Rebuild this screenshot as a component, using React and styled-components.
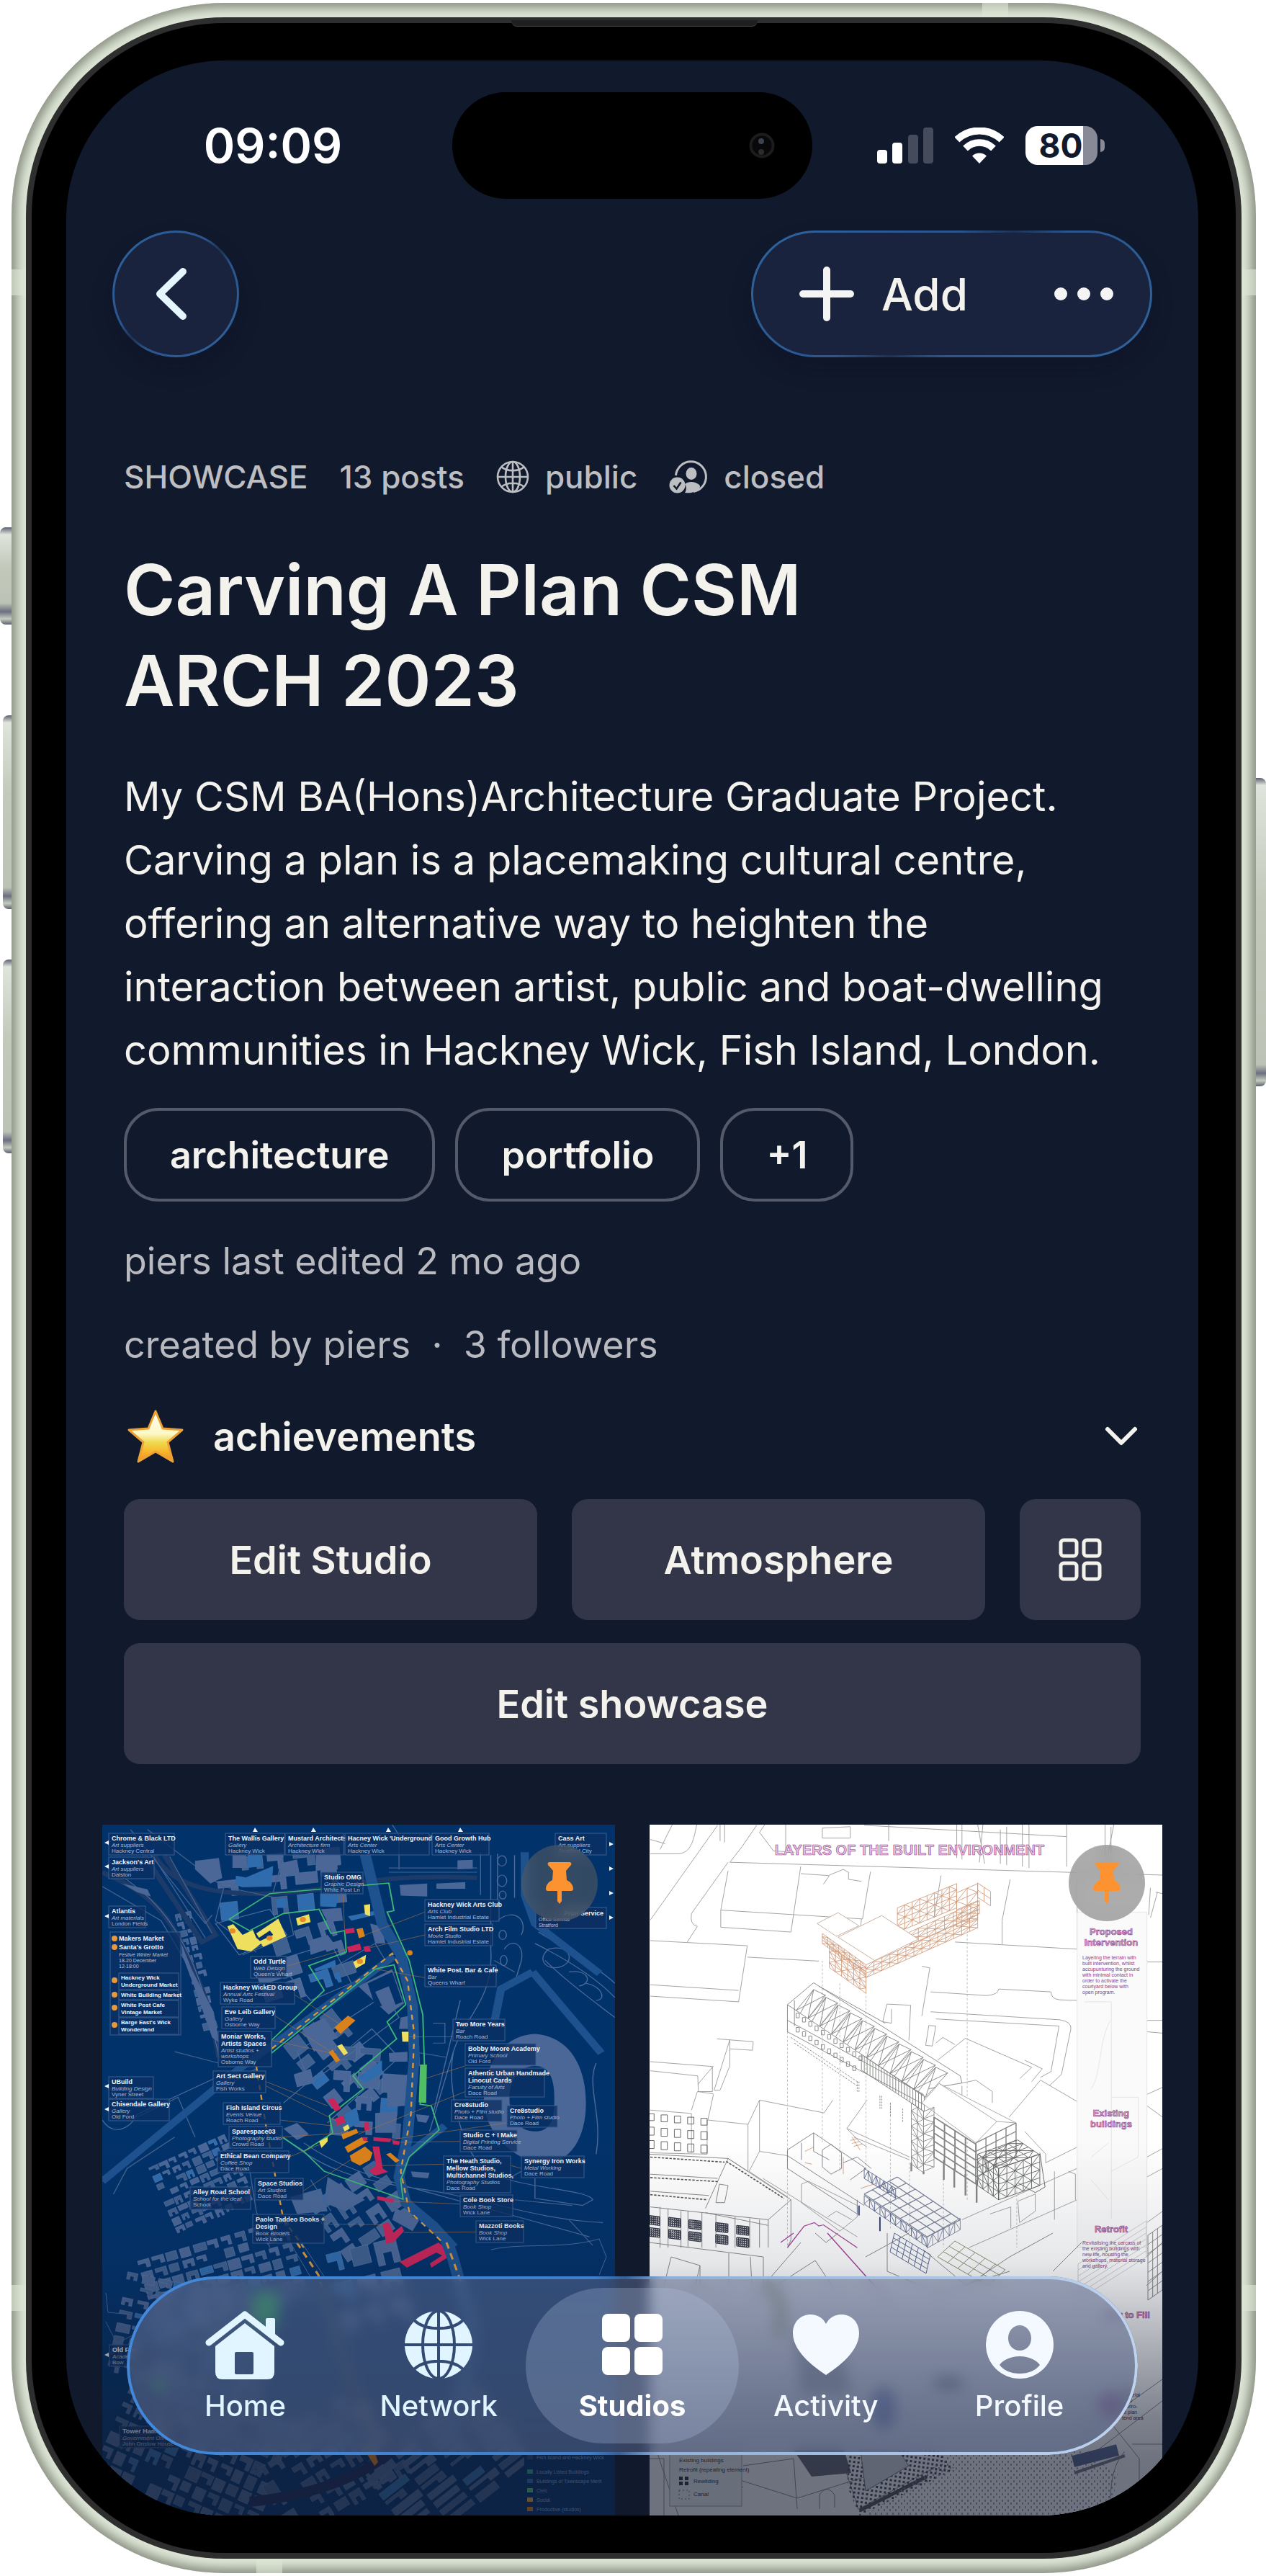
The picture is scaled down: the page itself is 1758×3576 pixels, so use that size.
import React from 'react';
import styled, { createGlobalStyle } from 'styled-components';

const GlobalStyle = createGlobalStyle`
  *, *::before, *::after { box-sizing: border-box; }
  body {
    margin: 0;
    background: #fff;
    font-family: Inter, "Liberation Sans", sans-serif;
    -webkit-font-smoothing: antialiased;
  }
  button { font: inherit; color: inherit; border: 0; background: none; padding: 0; cursor: pointer; }
  a { color: inherit; text-decoration: none; }
  svg { display: block; flex: none; }
`;

/* ---------- device ---------- */

const Page = styled.main`
  padding: 4px 14px 4px 16px;
`;

const Device = styled.div`
  position: relative;
  padding: 20px;
  border-radius: 296px;
  background: #dde6d6;
  box-shadow: inset 0 0 14px 7px #8a9083;
`;

const Rim = styled.div`
  padding: 8px;
  border-radius: 276px;
  background: #2e2e2e;
`;

const Bezel = styled.div`
  position: relative;
  padding: 52px 52px 52px 48px;
  border-radius: 268px;
  background: #000;
`;

const Speaker = styled.span`
  position: absolute;
  top: -4px;
  left: 50%;
  width: 342px;
  height: 9px;
  margin-left: -170px;
  border-radius: 0 0 8px 8px;
  background: #1e201f;
  border-bottom: 1px solid #444;
`;

const Key = styled.span`
  position: absolute;
  top: ${p => p.$top}px;
  height: ${p => p.$height}px;
  ${p => (p.$right ? 'left: 100%; width: 14px; border-radius: 0 8px 8px 0;' : `right: 100%; width: ${p.$width}px; border-radius: 8px 0 0 8px;`)}
  background: linear-gradient(#5d6070 0, #dfe4dc 10px, #c3cabc 40%, #bcc3b6 calc(100% - 30px), #6b6e80 calc(100% - 18px), #c5ccc0 calc(100% - 8px), #5d6070 100%);
`;

const Band = styled.span`
  position: absolute;
  background: rgba(222, 230, 214, 0.6);
  ${p => (p.$side === 'left' || p.$side === 'right' ? 'width: 20px; height: 36px;' : 'width: 36px; height: 20px;')}
  ${p => p.$side}: 0;
  ${p => p.$from}: ${p => p.$at}px;
`;

const Screen = styled.div`
  position: relative;
  display: flex;
  flex-direction: column;
  aspect-ratio: 393 / 852;
  border-radius: 220px;
  overflow: hidden;
  background: #11192d;
  color: #f4f2ec;
`;

/* ---------- status bar and header ---------- */

const StatusBar = styled.div`
  display: grid;
  grid-template-columns: 1fr 500px 1fr;
  align-items: center;
  flex: none;
  height: 236px;
  color: #fff;
`;

const Clock = styled.time`
  padding-left: 38px;
  text-align: center;
  font-size: 66px;
  font-weight: 600;
`;

const Island = styled.div`
  display: flex;
  align-items: center;
  justify-content: flex-end;
  height: 148px;
  padding-right: 52px;
  border-radius: 74px;
  background: #000;
`;

const Indicators = styled.div`
  display: flex;
  align-items: center;
  justify-content: center;
  gap: 30px;
  padding-right: 40px;
`;

const Battery = styled.div`
  display: flex;
  align-items: center;
  gap: 4px;
`;

const Charge = styled.div`
  width: 100px;
  height: 54px;
  border-radius: 17px;
  background: linear-gradient(90deg, #fff 80%, #888a98 80%);
  color: #11192d;
  padding-right: 2px;
  text-align: center;
  font-size: 46px;
  line-height: 54px;
  font-weight: 700;
`;

const BatteryTip = styled.i`
  width: 6px;
  height: 18px;
  border-radius: 0 6px 6px 0;
  background: #888a98;
`;

const Header = styled.header`
  display: flex;
  justify-content: space-between;
  flex: none;
  padding: 0 64px;
`;

const glass = `
  height: 176px;
  border: 3px solid transparent;
  border-radius: 88px;
  background:
    linear-gradient(#1a233e, #1a233e) padding-box,
    linear-gradient(135deg, #2f659f 0%, #2a558f 40%, #1e3354 50%, #2a558f 60%, #2f659f 100%) border-box;
  box-shadow: 0 16px 32px rgba(8, 12, 28, 0.2);
`;

const BackButton = styled.button`
  ${glass}
  display: grid;
  place-items: center;
  width: 176px;
  padding-right: 12px;
`;

const ActionPill = styled.div`
  ${glass}
  display: flex;
  align-items: center;
  gap: 120px;
  padding: 0 51px 0 64px;
`;

const PillButton = styled.button`
  display: flex;
  align-items: center;
  gap: 38px;
  height: 100%;
  font-size: 62px;
  font-weight: 500;
`;

/* ---------- studio details ---------- */

const Details = styled.section`
  flex: none;
  padding: 138px 80px 0;
`;

const Meta = styled.div`
  display: flex;
  align-items: center;
  height: 56px;
  gap: 44px;
  font-size: 44px;
  font-weight: 500;
  color: #bdbec2;
`;

const MetaItem = styled.span`
  display: flex;
  align-items: center;
  gap: 22px;
`;

const Title = styled.h1`
  max-width: 1100px;
  margin: 66px 0 0;
  font-size: 97px;
  line-height: 126px;
  font-weight: 600;
`;

const Description = styled.p`
  margin: 54px 0 0;
  font-size: 56px;
  line-height: 88px;
  white-space: pre-line;
`;

const Tags = styled.div`
  display: flex;
  gap: 28px;
  margin: 36px 0 24px;
`;

const Tag = styled.a`
  display: grid;
  place-items: center;
  height: 130px;
  padding: 0 60px;
  border: 4px solid #545a69;
  border-radius: 48px;
  font-size: 52px;
  font-weight: 600;
`;

const Credit = styled.p`
  display: flex;
  align-items: center;
  height: 116px;
  margin: 0;
  font-size: 52px;
  color: #b9bac0;
  white-space: pre;
`;

const Achievements = styled.button`
  display: flex;
  align-items: center;
  width: 100%;
  height: 140px;
  padding: 0 4px;
  gap: 40px;
  font-size: 54px;
  font-weight: 600;

  svg:last-child { margin-left: auto; }
`;

const Actions = styled.div`
  display: grid;
  grid-template-columns: 1fr 1fr 168px;
  gap: 32px 48px;
  margin-top: 17px;
`;

const Action = styled.button`
  display: grid;
  place-items: center;
  height: 168px;
  border-radius: 22px;
  background: #323648;
  font-size: 54px;
  font-weight: 600;
  ${p => p.$wide && 'grid-column: 1 / -1;'}
`;

/* ---------- gallery ---------- */

const Gallery = styled.section`
  display: grid;
  grid-template-columns: 1fr 1fr;
  gap: 48px;
  flex: 1;
  min-height: 0;
  padding: 84px 50px 0;
`;

const Post = styled.a`
  position: relative;
  min-height: 0;
  overflow: hidden;

  > svg { width: 100%; height: 100%; }
`;

const Pin = styled.span`
  position: absolute;
  top: 28px;
  right: 24px;
  display: grid;
  place-items: center;
  width: 106px;
  height: 106px;
  border-radius: 50%;
  background: rgba(96, 96, 96, 0.52);
  backdrop-filter: blur(10px);
`;

const Fade = styled.div`
  position: absolute;
  inset: auto 0 0;
  height: 520px;
  background: linear-gradient(rgba(17, 25, 45, 0) 0%, rgba(17, 25, 45, 0.1) 32%, rgba(17, 25, 45, 0.34) 54%, rgba(17, 25, 45, 0.55) 74%, rgba(17, 25, 45, 0.61) 86%);
  pointer-events: none;
`;

/* ---------- tab bar ---------- */

const TabBar = styled.nav`
  position: absolute;
  left: 84px;
  right: 84px;
  bottom: 84px;
  display: grid;
  grid-template-columns: repeat(5, 1fr);
  height: 248px;
  padding: 16px 30px;
  border-radius: 124px;
  background: rgba(88, 104, 140, 0.54);
  backdrop-filter: blur(9px);

  &::after {
    content: "";
    position: absolute;
    inset: 0;
    padding: 4px;
    border-radius: inherit;
    background: linear-gradient(92deg, #4289dd 0, #3f7fcb 46%, #35609a 49%, #8fb0da 53%, #bfd3ef 100%);
    mask: linear-gradient(#000 0 0) content-box exclude, linear-gradient(#000 0 0);
    pointer-events: none;
  }
`;

const Tab = styled.a`
  position: relative;
  display: flex;
  flex-direction: column;
  align-items: center;
  justify-content: space-between;
  padding: 30px 0 28px;
  font-size: 40px;
  line-height: 48px;
  font-weight: ${p => (p.$active ? 700 : 500)};
  color: ${p => p.$tint};

  ${p => p.$active && `
    &::before {
      content: "";
      position: absolute;
      inset: 0 -14px;
      z-index: -1;
      border-radius: 108px;
      background: rgba(184, 200, 232, 0.26);
    }
  `}
`;

const TabIcon = styled.span`
  display: grid;
  place-items: center;
  height: 98px;
`;

/* ---------- icons ---------- */

const Camera = () => (
  <svg width="36" height="36" viewBox="0 0 36 36">
    <circle cx="18" cy="18" r="15.500" fill="#08080a" stroke="#1b1c1e" strokeWidth="4" />
    <ellipse cx="17" cy="12" rx="4" ry="4" fill="#3d4152" />
    <ellipse cx="17" cy="27" rx="4" ry="4" fill="#2c2c2c" />
  </svg>
);

const Signal = () => (
  <svg width="78" height="50" viewBox="0 0 78 50" fill="#fff">
    <rect x="0" y="31" width="14" height="19" rx="4" />
    <rect x="21" y="21" width="14" height="29" rx="4" />
    <rect x="43" y="10" width="14" height="40" rx="4" opacity="0.22" />
    <rect x="64" y="0" width="14" height="50" rx="4" opacity="0.22" />
  </svg>
);

const Wifi = () => (
  <svg width="68" height="50" viewBox="0 0 68 50" fill="none" stroke="#fff">
    <path d="M2.900 17A45 45 0 0 1 65.100 17" strokeWidth="10" />
    <path d="M14.500 29A28 28 0 0 1 53.500 29" strokeWidth="9.500" />
    <path d="M24 39.500A14.500 14.500 0 0 1 44 39.500L34 50Z" fill="#fff" stroke="none" />
  </svg>
);

const ChevronLeft = () => (
  <svg width="44" height="72" viewBox="0 0 44 72" fill="none" stroke="#e6f6ff" strokeWidth="10" strokeLinecap="round" strokeLinejoin="round">
    <path d="M38 5 6 36l32 31" />
  </svg>
);

const Plus = () => (
  <svg width="76" height="76" viewBox="0 0 76 76" stroke="#f4f4f4" strokeWidth="10" strokeLinecap="round">
    <path d="M38 5v66M5 38h66" />
  </svg>
);

const Dots = () => (
  <svg width="82" height="18" viewBox="0 0 82 18" fill="#f4f4f4">
    <circle cx="9" cy="9" r="9" />
    <circle cx="41" cy="9" r="9" />
    <circle cx="73" cy="9" r="9" />
  </svg>
);

const GlobeLine = () => (
  <svg width="46" height="46" viewBox="0 0 46 46" fill="none" stroke="#bdbec2" strokeWidth="2.600">
    <circle cx="23" cy="23" r="21" />
    <ellipse cx="23" cy="23" rx="10" ry="21" />
    <path d="M23 2v42M2 23h42M7 9c8 7 24 7 32 0M7 37c8-7 24-7 32 0" />
  </svg>
);

const MemberCheck = () => (
  <svg width="54" height="46" viewBox="0 0 54 46">
    <path d="M9.500 21A21 21 0 1 1 34 43.500" fill="none" stroke="#bdbec2" strokeWidth="3" />
    <ellipse cx="31" cy="18.500" rx="7.500" ry="8.500" fill="#bdbec2" />
    <path d="M22 45c3-4 2-9 0-12 5-4 14-4 20 1 2 2 1 4-1 6-4 4-11 6-19 5Z" fill="#bdbec2" />
    <circle cx="11.500" cy="34.500" r="11" fill="#bdbec2" />
    <path d="m6.500 35 4 4.500 6-9" fill="none" stroke="#11192d" strokeWidth="2.600" />
  </svg>
);

const Star = () => (
  <svg width="80" height="76" viewBox="0 0 80 76">
    <defs>
      <linearGradient id="starFill" x1="0" y1="0" x2="0" y2="1">
        <stop offset="0" stopColor="#fffef4" />
        <stop offset="0.45" stopColor="#fdf7c4" />
        <stop offset="0.62" stopColor="#eed94f" />
        <stop offset="0.8" stopColor="#f9b72c" />
        <stop offset="1" stopColor="#ef8a1d" />
      </linearGradient>
    </defs>
    <path d="M40 3 50 27 77 29 57 46 64 73 40 59 16 73 23 46 3 29 30 27Z" fill="url(#starFill)" stroke="#eda236" strokeWidth="3" strokeLinejoin="round" />
  </svg>
);

const ChevronDown = () => (
  <svg width="46" height="28" viewBox="0 0 46 28" fill="none" stroke="#f4f2ec" strokeWidth="6" strokeLinecap="round" strokeLinejoin="round">
    <path d="m4 4 19 19L42 4" />
  </svg>
);

const GridOutline = () => (
  <svg width="60" height="60" viewBox="0 0 60 60" fill="none" stroke="#f4f2ec" strokeWidth="5">
    <rect x="3" y="3" width="22" height="22" rx="4" />
    <rect x="35" y="3" width="22" height="22" rx="4" />
    <rect x="3" y="35" width="22" height="22" rx="4" />
    <rect x="35" y="35" width="22" height="22" rx="4" />
  </svg>
);

const PinIcon = () => (
  <svg width="38" height="58" viewBox="0 0 38 58" fill="#fd9330">
    <path d="M5 0h28c3 0 3 4 1 5l-6 7 1 13c5 2 9 7 9 12 0 2-1 3-3 3H22v14l-3 4-3-4V40H3c-2 0-3-1-3-3 0-5 4-10 9-12l1-13-6-7C2 4 2 0 5 0Z" />
  </svg>
);

const HomeIcon = () => (
  <svg width="110" height="96" viewBox="0 0 110 96" fill="currentColor">
    <path d="M5 45 55 6l50 39" fill="none" stroke="currentColor" strokeWidth="9" strokeLinecap="round" strokeLinejoin="round" />
    <path d="M84 13q0-2 2-2h9q2 0 2 2v26L84 28Z" />
    <path fillRule="evenodd" d="M55 18 96 50v36q0 10-10 10H24q-10 0-10-10V50ZM43 58q-2 0-2 2v27q0 2 2 2h22q2 0 2-2V60q0-2-2-2Z" />
  </svg>
);

const NetworkIcon = () => (
  <svg width="94" height="94" viewBox="0 0 94 94">
    <mask id="globeCut">
      <rect width="94" height="94" fill="#fff" />
      <g fill="none" stroke="#000" strokeWidth="4">
        <ellipse cx="47" cy="47" rx="22" ry="47" />
        <path d="M47 0v94M0 47h94M13 13c16 15 52 15 68 0M13 81c16-15 52-15 68 0" />
      </g>
    </mask>
    <circle cx="47" cy="47" r="47" fill="currentColor" mask="url(#globeCut)" />
  </svg>
);

const StudiosIcon = () => (
  <svg width="84" height="86" viewBox="0 0 84 86" fill="currentColor">
    <rect x="0" y="0" width="39" height="39" rx="8" />
    <rect x="45" y="0" width="39" height="39" rx="8" />
    <rect x="0" y="46" width="39" height="39" rx="8" />
    <rect x="45" y="46" width="39" height="39" rx="8" />
  </svg>
);

const HeartIcon = () => (
  <svg width="92" height="84" viewBox="0 0 92 84" fill="currentColor">
    <path d="M46 84C38 78 0 55 0 26 0 10 11 0 25 0c9 0 17 5 21 13C50 5 58 0 67 0c14 0 25 10 25 26 0 29-38 52-46 58Z" />
  </svg>
);

const ProfileIcon = () => (
  <svg width="94" height="94" viewBox="0 0 94 94" fill="currentColor">
    <path fillRule="evenodd" d="M47 0a47 47 0 1 0 0 94 47 47 0 0 0 0-94Zm0 20c9 0 16 8 16 18s-7 17-16 17-16-7-16-17 7-18 16-18Zm0 43c13 0 24 6 28 12-6 8-16 12-28 12s-22-4-28-12c4-6 15-12 28-12Z" />
  </svg>
);

/* ---------- drawing helpers ---------- */

const seeded = seed => () => {
  seed = (seed * 16807) % 2147483647;
  return seed / 2147483647;
};

/* Lines of a parallelogram mesh: n cells along u, m cells along v. */
const mesh = (x, y, [ux, uy], [vx, vy], n, m, braces = false) => {
  let d = '';
  for (let i = 0; i <= n; i++) {
    const t = i / n;
    d += `M${x + ux * t} ${y + uy * t}l${vx} ${vy}`;
  }
  for (let j = 0; j <= m; j++) {
    const t = j / m;
    d += `M${x + vx * t} ${y + vy * t}l${ux} ${uy}`;
  }
  if (braces) {
    for (let i = 0; i < n; i++) {
      for (let j = 0; j < m; j++) {
        const a = [x + (ux * i) / n + (vx * j) / m, y + (uy * i) / n + (vy * j) / m];
        d += (i + j) % 2
          ? `M${a[0]} ${a[1]}l${ux / n + vx / m} ${uy / n + vy / m}`
          : `M${a[0] + ux / n} ${a[1] + uy / n}l${vx / m - ux / n} ${vy / m - uy / n}`;
      }
    }
  }
  return d;
};

/* ---------- map artwork ---------- */

const districts = [
  { x: 60, y: 575, w: 210, h: 110, a: -16, sx: 20, sy: 17, seed: 11 },
  { x: 20, y: 640, w: 200, h: 130, a: 12, sx: 22, sy: 18, seed: 14 },
  { x: 10, y: 780, w: 230, h: 180, a: 24, sx: 20, sy: 22, seed: 5 },
  { x: 220, y: 820, w: 180, h: 140, a: -32, sx: 24, sy: 24, seed: 8 },
  { x: 380, y: 820, w: 200, h: 140, a: -38, sx: 52, sy: 14, seed: 21 },
  { x: 80, y: 450, w: 110, h: 100, a: -24, sx: 15, sy: 13, seed: 31 },
  { x: 160, y: 40, w: 170, h: 70, a: -6, sx: 36, sy: 30, seed: 3 },
  { x: 210, y: 150, w: 110, h: 70, a: -18, sx: 34, sy: 32, seed: 9 },
  { x: 290, y: 270, w: 70, h: 150, a: -38, sx: 32, sy: 30, seed: 17 },
  { x: 320, y: 310, w: 90, h: 120, a: 4, sx: 34, sy: 34, seed: 27 },
  { x: 300, y: 490, w: 110, h: 80, a: -34, sx: 30, sy: 26, seed: 37 },
  { x: 320, y: 585, w: 90, h: 90, a: -14, sx: 34, sy: 42, seed: 41 },
  { x: 120, y: 120, w: 24, h: 160, a: -14, sx: 12, sy: 12, seed: 43 },
];

const makeBlocks = () => {
  const out = [];
  districts.forEach(({ x, y, w, h, a, sx, sy, seed }) => {
    const rnd = seeded(seed * 977);
    for (let j = 0; j < h / sy; j++) {
      for (let i = 0; i < w / sx; i++) {
        if (rnd() < 0.08) continue;
        const bw = sx * (0.6 + rnd() * 0.32);
        const bh = sy * (0.5 + rnd() * 0.35);
        const px = x + i * sx;
        const py = y + j * sy;
        const kind = rnd();
        let d = `M${px} ${py}h${bw}v${bh}h${-bw}Z`;
        if (kind < 0.35) d = `M${px} ${py}h${bw}v${bh}h${-bw * 0.35}v${-bh * 0.55}h${-bw * 0.65}Z`;
        else if (kind < 0.55) d = `M${px} ${py}h${bw}v${bh}h${-bw * 0.3}v${-bh * 0.5}h${-bw * 0.4}v${bh * 0.5}h${-bw * 0.3}Z`;
        out.push({
          d,
          turn: `rotate(${a} ${x + w / 2} ${y + h / 2})`,
          fill: rnd() < 0.07 ? '#2f6cad' : rnd() < 0.6 ? '#4a6797' : '#40608f',
        });
      }
    }
  });
  return out;
};
const blocks = makeBlocks();

const yellow = [
  '395,440 412,432 440,470 470,452 480,480 497,498 465,528 425,520',
  '480,465 545,413 568,475 500,512 490,492 530,470 520,455 488,480',
  '597,412 635,397 640,425 602,437', '797,365 815,362 815,405 800,398',
  '765,565 803,540 800,570 773,588', '908,810 928,810 928,845 910,845',
  '718,860 732,853 750,885 738,893', '735,1145 750,1135 755,1150 740,1160', '665,1195 690,1180 690,1195 672,1218',
];
const orange = [
  '710,795 750,753 772,770 728,818', '693,882 705,873 727,910 715,918', '775,450 793,445 800,475 782,482',
  '730,1170 775,1150 780,1165 735,1188', '740,1215 790,1180 810,1195 750,1235',
  '755,1245 800,1213 822,1235 815,1260 785,1280 760,1265', '862,1240 875,1235 902,1262 890,1270',
];
const red = [
  '740,450 768,445 770,462 742,467', '747,512 785,500 790,522 752,532', '795,512 812,508 818,528 800,530',
  '690,1050 708,1042 730,1080 712,1090', '712,1115 735,1103 742,1128 718,1140', '797,1130 811,1127 813,1155 799,1157',
  '825,1180 878,1185 874,1198 825,1193', '880,1190 903,1195 900,1208 882,1205', '792,1180 808,1180 806,1195 795,1192',
  '822,1213 842,1213 852,1290 868,1302 830,1315 812,1298 832,1280', '836,1387 887,1398 882,1410 836,1400',
  '852,1485 870,1480 884,1515 908,1492 915,1510 885,1548 862,1555', '995,1568 1010,1555 1025,1560 1025,1568',
];

/* x, y, width, height, bold lines, then small lines */
const labels = [
  [9, 12, 91, 30, ['Chrome & Black LTD'], ['Art suppliers', 'Hackney Central']],
  [9, 45, 63, 30, ["Jackson's Art"], ['Art suppliers', 'Dalston']],
  [9, 113, 51, 30, ['Atlantis'], ['Art materials', 'London Fields']],
  [9, 350, 62, 30, ['UBuild'], ['Building Design', 'Vyner Street']],
  [9, 381, 84, 30, ['Chisendale Gallery'], ['Gallery', 'Old Ford']],
  [171, 12, 82, 30, ['The Wallis Gallery'], ['Gallery', 'Hackney Wick']],
  [254, 12, 81, 30, ['Mustard Architects'], ['Architecture firm', 'Hackney Wick']],
  [337, 12, 117, 30, ["Hacney Wick 'Underground'"], ['Arts Center', 'Hackney Wick']],
  [458, 12, 79, 30, ['Good Growth Hub'], ['Arts Center', 'Hackney Wick']],
  [629, 12, 71, 30, ['Cass Art'], ['Art suppliers', 'Stratford City']],
  [304, 66, 58, 30, ['Studio OMG'], ['Graphic Design', 'White Post Ln']],
  [448, 104, 103, 30, ['Hackney Wick Arts Club'], ['Arts Club', 'Hamlet Industrial Estate']],
  [448, 138, 94, 30, ['Arch Film Studio LTD'], ['Movie Studio', 'Hamlet Industrial Estate']],
  [448, 195, 99, 30, ['White Post. Bar & Cafe'], ['Bar', 'Queens Wharf']],
  [206, 183, 50, 30, ['Odd Turtle'], ['Web Design', "Queen's Wharf"]],
  [164, 219, 103, 30, ['Hackney WickED Group'], ['Annual Arts Festival', 'Wyke Road']],
  [166, 253, 74, 30, ['Eve Leib Gallery'], ['Gallery', 'Osborne Way']],
  [161, 287, 74, 49, ['Moniar Works,', 'Artists Spaces'], ['Artist studios +', 'workshops', 'Osborne Way']],
  [154, 342, 73, 30, ['Art Sect Gallery'], ['Gallery', 'Fish Works']],
  [168, 386, 79, 30, ['Fish Island Circus'], ['Events Venue', 'Roach Road']],
  [176, 419, 74, 30, ['Sparespace03'], ['Photography studio', 'Crowd Road']],
  [160, 453, 99, 30, ['Ethical Bean Company'], ['Coffee Shop', 'Dace Road']],
  [212, 491, 67, 30, ['Space Studios'], ['Art Studios', 'Dace Road']],
  [122, 503, 84, 31, ['Alley Road School'], ['School for the deaf', 'School']],
  [209, 541, 99, 40, ['Paolo Taddeo Books +', 'Design'], ['Book Binders', 'Wick Lane']],
  [487, 270, 72, 30, ['Two More Years'], ['Bar', 'Roach Road']],
  [504, 304, 98, 30, ['Bobby Moore Academy'], ['Primary School', 'Old Ford']],
  [504, 338, 110, 40, ['Athentic Urban Handmade', 'Linocut Cards'], ['Faculty of Arts', 'Dace Road']],
  [485, 382, 70, 30, ['Cre8studio'], ['Photo + Film studio', 'Dace Road']],
  [562, 390, 70, 30, ['Cre8studio'], ['Photo + Film studio', 'Dace Road']],
  [497, 424, 79, 30, ['Studio C + I Make'], ['Digital Printing Service', 'Dace Road']],
  [474, 460, 93, 51, ['The Heath Studio,', 'Mellow Studios,', 'Multichannel Studios,'], ['Photography Studios', 'Dace Road']],
  [582, 460, 87, 30, ['Synergy Iron Works'], ['Metal Working', 'Dace Road']],
  [497, 514, 73, 30, ['Cole Book Store'], ['Book Shop', 'Wick Lane']],
  [519, 550, 66, 30, ['Mazzoti Books'], ['Book Shop', 'Wick Lane']],
  [24, 835, 96, 30, ['Tower Hamlets'], ['Government Office', 'John Onslow House']],
  [10, 722, 60, 30, ['Old Ford'], ['Academy', 'Bow']],
];

const markets = [
  [161, ['Makers Market']], [173, ["Santa's Grotto"]], [215, ['Hackney Wick', 'Underground Market']],
  [239, ['White Building Market']], [253, ['White Post Cafe', 'Vintage Market']], [277, ["Barge East's Wick", 'Wonderland']],
];

const legend = [
  [881, '#294a78', 'Fish Island and Hackney Wick'], [901, '#2fa58c', 'Locally Listed Buildings'],
  [914, '#2f6cad', 'Buildings of Townscape Merit'], [927, '#4fc17a', 'Civic'], [940, '#e9a23a', 'Social'], [953, '#d9811b', 'Productive (studios)'],
];

const leaders = 'M735 330 740 450M976 390 790 475M976 470 815 515M570 580 745 520M976 620 830 590M593 680 735 790M536 755 700 880M525 840 720 890M508 985 690 1070M508 1000 720 1125M550 1120 700 1140M556 1180 800 1160M617 1370 770 1250M576 1250 680 1200M1058 828 930 828M1095 930 975 975M1095 1020 780 1170M1217 1130 870 1190M1080 1195 905 1198M1032 1275 850 1280M1230 1280 1260 1290M1080 1415 885 1405M1127 1513 915 1515M680 1485 860 1487';

const MapArtwork = () => (
  <svg viewBox="0 0 712 959" preserveAspectRatio="xMidYMin slice" fontFamily='"Liberation Sans", sans-serif'>
    <rect width="712" height="959" fill="#02326a" />
    <g stroke="#6581ad" strokeWidth="0.500">
      {blocks.map((b, i) => <path key={i} d={b.d} transform={b.turn} fill={b.fill} />)}
    </g>
    <g transform="scale(.472 .3954) translate(-27 -83)" fill="none">
      <path d="M27 250C120 300 200 350 260 500S340 700 370 900M180 190C230 290 330 330 520 325S800 250 1130 270M150 190 320 495 360 470 210 190" stroke="#1c3b69" strokeWidth="16" />
      <path d="M40 230C150 310 210 380 265 500S340 740 375 920M1170 190V520C1180 700 1090 760 1060 880L990 1160M1190 185V360M1080 700 1040 900 1000 1100M1240 190V340M27 1120C60 1180 110 1150 130 1100L400 950M1300 500C1400 560 1480 620 1535 690M1310 460C1420 540 1500 600 1535 640M1330 560C1400 640 1470 700 1535 760M560 1180C660 1280 760 1330 950 1360S1300 1470 1500 1480M620 1200C760 1320 900 1340 1460 1530M1060 880C1040 1000 1080 1200 1140 1280S1460 1360 1470 1400L1440 1420 1300 1395 1300 1325M1480 920C1450 1000 1500 1100 1480 1240M1210 520C1230 480 1270 500 1260 560L1240 640M1190 420C1240 370 1280 420 1260 470" stroke="#4b6a9a" strokeWidth="3" />
      <path d="M110 100 330 430 350 400M160 100 380 300 560 345M180 200 330 480M225 195 350 465M560 190 530 320M27 300 200 420 270 560M880 83 900 120 900 240M1140 180V330M870 235H1130M870 250H1130M385 300 360 420 480 530M575 390 590 470 440 540M700 590 830 500 860 560M380 1010 480 940M240 880 370 920M940 880 1040 900M960 900V930M1060 1060 1100 1120M1000 780H1035V850H1000M1180 560 1240 600M130 1110 250 1040 300 1180M60 1380 100 1290 240 1180M460 1290 480 1440 520 1568M640 1330 700 1440M1230 1320 1260 1300M1240 1400 1410 1420M1400 1470 1470 1560" stroke="#43628f" strokeWidth="3" />
      <g stroke="#4b6a9a" strokeWidth="3">
        <ellipse cx="1203" cy="210" rx="13" ry="18" /><ellipse cx="1203" cy="280" rx="14" ry="20" /><ellipse cx="1205" cy="330" rx="10" ry="14" />
        <ellipse cx="1205" cy="470" rx="11" ry="16" /><ellipse cx="1208" cy="560" rx="10" ry="18" />
        <path d="M1340 520C1400 500 1420 560 1380 580S1300 560 1340 520M1400 600C1460 590 1470 640 1430 650M1450 640C1500 650 1510 700 1480 700" />
        <path d="M360 430 520 380 570 470 430 540ZM540 560 700 500 760 640 640 700ZM600 880 860 680 900 760 640 990ZM560 1060 820 800 900 900 690 1130" />
      </g>
      <g fill="#4a6797">
        <path d="M300 210 370 200 380 270 345 290 300 240ZM545 220 600 205 608 260 550 268ZM655 190 715 180 720 240 655 245ZM902 295 983 290 983 335 905 332ZM1072 208 1117 206 1117 238 1072 240ZM85 290 160 310 170 335 130 320ZM635 490 690 470 715 510 640 540ZM260 500 290 590 355 740 372 850 350 830 300 660 262 540ZM780 650 880 590 915 710 870 750ZM615 800 680 760 720 830 650 880ZM870 885 925 880 925 915 872 915ZM590 960 640 940 650 990 600 1005ZM865 980 925 960 920 1070 865 1075ZM830 1095 895 1090 890 1165 830 1165ZM560 1150 600 1130 635 1170 600 1190ZM580 1390 670 1360 690 1440 600 1450ZM690 1320 800 1400 740 1440 680 1410ZM890 1430 960 1470 940 1510 880 1470ZM1010 290 1095 285 1095 308 1010 308ZM410 190 450 190 455 235 410 235ZM670 380 730 375 735 420 690 425ZM815 430 850 440 860 500 830 500ZM905 760 925 755 930 800 900 800ZM935 1300 990 1305 985 1325 940 1320ZM950 1100 990 1105 980 1130 955 1125Z" />
        <path fillRule="evenodd" d="M1300 818C1400 825 1450 930 1450 1060S1400 1270 1330 1272 1150 1180 1150 1050 1210 822 1300 818ZM1300 930C1250 930 1225 980 1225 1045S1250 1160 1300 1160 1357 1110 1357 1045 1345 930 1300 930Z" />
      </g>
      <path d="M808 640 880 600 910 705 890 715 870 650 830 670 850 720 830 720Z" fill="#02326a" />
      <g fill="#2f6cad">
        <path d="M420 262 450 268 530 228 525 300 440 303 420 295ZM455 175 495 180 495 230 455 235ZM540 345 570 340 570 375 540 375ZM668 325 722 330 715 372 668 370ZM750 405 830 385 830 400 760 420ZM650 590 712 558 715 580 655 598ZM708 605 725 600 732 635 722 638ZM780 970 850 910 850 955 800 990ZM740 1100 775 1075 785 1130 750 1150Z" />
      </g>
      <path d="M1270 180V330L1300 430 1490 605M1293 600 1495 885M1293 600 1200 660 1180 780M1035 1140 925 1240M27 1335 430 940 530 855 885 545" stroke="#1e528f" strokeWidth="24" />
      <path d="M800 185 850 430 905 540 940 720 945 900 925 1180 900 1320 920 1410 1000 1490 1060 1568" stroke="#1e528f" strokeWidth="32" />
      <path d="M480 930 510 1150 560 1470 620 1568M525 870 880 535 925 630 945 820 935 1100 905 1300 930 1440 1045 1568" stroke="#dd9a3c" strokeWidth="5" strokeDasharray="18 16" />
      <path d="M400 415 520 325 870 288 885 385 865 390 930 560 970 750 975 930 962 1065 995 1070 1018 1155 930 1250 905 1330 912 1398 680 1300 620 1230 550 1175M400 415 460 455 560 395 665 380 700 465 740 455 745 530 635 578 680 665 525 840V885L830 590 885 575 920 715 865 775 893 835 765 965 795 1010 695 1105 705 1165 620 1230" stroke="#3cb878" strokeWidth="4" />
      <path d={leaders} stroke="#b0713d" strokeWidth="2" opacity="0.7" />
      <g fill="#eee05e">{yellow.map(p => <polygon key={p} points={p} />)}</g>
      <g fill="#d9811b">{orange.map(p => <polygon key={p} points={p} />)}<ellipse cx="932" cy="533" rx="8" ry="9" /></g>
      <g fill="#c8265a">{red.map(p => <polygon key={p} points={p} />)}</g>
      <polygon points="962,925 982,925 980,1060 958,1058" fill="#50bf63" />
      <g fill="#e88a2a"><circle cx="410" cy="456" r="9" /><circle cx="519" cy="481" r="9" /><circle cx="617" cy="416" r="9" /><circle cx="785" cy="563" r="9" /></g>
    </g>
    <path d="M467 580 479 590 481 600 457 615 455 609 472 598 464 594 423 615 413 607Z" fill="#c8265a" />
    <path d="M476 575C490 600 495 640 510 680S490 800 480 860" fill="none" stroke="#1e528f" strokeWidth="16" />
    <path d="M270 580 300 625 340 760 380 850M478 580 500 640" fill="none" stroke="#dd9a3c" strokeWidth="3" strokeDasharray="9 7" />
    <path d="M205 940C300 930 380 900 420 850" fill="none" stroke="#182a55" strokeWidth="14" />
    <path d="M365 870 377 868 383 885 378 890Z" fill="#d9811b" />
    <path d="M5 650 8 677 40 680M5 690 20 720 60 700M270 570 330 660M255 570 305 655M540 590C580 580 640 590 690 575L700 600 690 625" fill="none" stroke="#4b6a9a" />
    <rect x="209" y="650" width="36" height="44" rx="6" fill="#1fae52" />
    <rect x="70" y="770" width="16" height="14" fill="#1fae52" />
    {labels.map(([x, y, w, h, heads, lines]) => (
      <g key={`${x}-${y}`} fill="#eef2fa">
        <rect x={x} y={y} width={w} height={h} fill="#0b2f63" fillOpacity="0.78" stroke="#3a5e92" />
        {heads.map((t, i) => <text key={t} x={x + 4} y={y + 10 + i * 10} fontSize="9" fontWeight="700">{t}</text>)}
        {lines.map((t, i) => (
          <text key={t + i} x={x + 4} y={y + 9 + heads.length * 10 + i * 8} fontSize="8" fill="#a9b8d3" fontStyle={i < lines.length - 1 ? 'italic' : 'normal'}>{t}</text>
        ))}
      </g>
    ))}
    <rect x="11" y="149" width="98" height="143" fill="#0b2f63" fillOpacity="0.7" stroke="#3a5e92" />
    <g fill="#eef2fa">
      {markets.map(([y, lines], i) => (
        <React.Fragment key={y}>
          {i > 1 && <rect x="23" y={y - 9} width="83" height={lines.length * 10 + 3} fill="none" stroke="#3a5e92" />}
          <circle cx="17" cy={y - 3 + (lines.length - 1) * 4} r="4" fill="#e8993c" />
          {lines.map((t, j) => <text key={t} x={i > 1 ? 26 : 23} y={y + j * 10} fontSize={i > 1 ? 8 : 9} fontWeight="700">{t}</text>)}
        </React.Fragment>
      ))}
      <text x="23" y="183" fontSize="7" fontStyle="italic" fill="#b6c4dc">Festive Winter Market</text>
      <text x="23" y="191" fontSize="7" fill="#b6c4dc">18-20 December</text>
      <text x="23" y="199" fontSize="7" fill="#b6c4dc">12-18:00</text>
    </g>
    <rect x="602" y="115" width="98" height="29" fill="#0b2f63" stroke="#3a5e92" />
    <text x="641" y="126" fontSize="9" fontWeight="700" fill="#eef2fa">Print Service</text>
    <text x="606" y="134" fontSize="7" fill="#b6c4dc">Office Service</text>
    <text x="606" y="142" fontSize="7" fill="#b6c4dc">Stratford</text>
    <g fill="#eef2fa">
      <path d="M212 4l4 6h-7ZM293 4l4 6h-7ZM397 4l4 6h-7ZM497 4l4 6h-7ZM3 25l6-3v6ZM3 58l6-3v6ZM3 127l6-3v6ZM3 363l6-3v6ZM3 395l6-3v6ZM3 736l6-3v6ZM710 27l-6-3v6ZM710 61l-6-3v6ZM710 95l-6-3v6ZM710 129l-6-3v6Z" />
    </g>
    <rect x="586" y="868" width="108" height="91" fill="#02326a" />
    {legend.map(([y, color, text]) => (
      <g key={text}>
        <rect x="590" y={y - 6} width="8" height="6" fill={color} />
        <text x="603" y={y} fontSize="7" fill="#8fa6cd">{text}</text>
      </g>
    ))}
  </svg>
);

/* ---------- axonometric artwork ---------- */

const site = 'M47 135 90 150M47 185H130C160 180 170 150 180 83M110 83 75 170M240 85 47 418M352 85 310 160 275 215 1515 260M247 83V140M260 83V145 M435 83V175M360 110 400 175 460 180M360 110 375 83M540 95 620 90V130H540ZM730 83V140M660 85 1240 125V230M925 83V200M940 83V205M985 83 1005 220M1000 83 990 215M1050 100V220M1068 90V225M1113 83V230M1132 83V235M1350 83V240L1375 83M1240 125V83M1367 90V240 M47 490 325 508 300 705 47 685M300 665 47 645M325 548 530 562M270 215 165 395Q160 435 182 440L153 495M270 245 249 383 249 443 450 460 478 230M249 383 655 414 678 248M560 260 600 240 615 250V275L652 282M543 292 560 262 478 255M652 414 650 440M880 262 860 410M1078 275 1055 420 1055 503M1270 265V520L920 495M825 580 848 586 825 755 M850 670 1010 683Q1045 680 1045 660L1195 670Q1195 695 1220 698L1270 700M850 740 1220 768Q1255 775 1252 800L1225 960 1190 1000M865 765 1218 790 1195 950 1165 970M725 713 793 717 788 840M725 713 713 775 738 780V730M845 788 865 790 855 860 836 858ZM865 850 885 830 920 855M950 833 870 910M950 833 1140 935 1105 975M1120 910 1170 940 1140 985M238 835 342 845 340 875 275 870M275 838V930L247 1015H230ZM47 915 225 932V1020L185 1020 183 965 47 947M228 930 183 995M228 1030 212 1120 327 1135 360 1050 545 1095 570 1050M165 1085 182 1020 228 1028M47 1085 165 1097M165 1097V1235M210 1120V1240L47 1235M327 1135V1300L270 1255M360 1050V1230L440 1245M360 1230 330 1300M610 1150 790 1250M610 1150 668 1050M630 1180 790 1260M1165 980 1270 1055M1165 980 1075 1110M1120 1160 1180 1240V1270L1270 1215M940 990 980 980 1027 1020V1060M940 1000V1040M610 1150 650 1200 668 1215M480 1345V1410L590 1510 605 1495 640 1460V1420L500 1335ZM555 1460 580 1440 625 1470M1205 1300V1470M1245 1300 1265 1310V1400M1100 1405 1150 1380V1440L1105 1480ZM1020 1450 1080 1425V1500M1470 565H1515M1470 770H1515M1470 810 1515 815M1470 1030 1515 1005M1470 1070 1515 1110M1480 305 1475 400M1495 320 1515 325M1480 410 1500 320M1470 1250 1515 1220M1470 1320 1515 1290M1470 1480 1515 1440M940 1470 1270 1290M960 1568 1270 1400M370 1325 640 1530M330 1300 440 1390';

const trusses = () => {
  let d = '';
  for (let i = 0; i < 11; i++) {
    const t = i / 11;
    const lx = 465 + t * 370;
    const ly = 735 + t * 305;
    const rx = 515 + t * 385;
    const ry = 662 + t * 300;
    d += `M${lx} ${ly}L${rx} ${ry}L${lx + 12} ${ly + 10}M${lx} ${ly}L${rx + 34} ${ry + 20}L${lx + 34} ${ly + 28}L${rx} ${ry}M${rx} ${ry}l34 20`;
  }
  return d;
};

const windowRow = (x, y, dx, dy, n, w, h) => {
  let d = '';
  for (let i = 0; i < n; i++) d += `M${x + dx * i} ${y + dy * i}h${w}v${h}h${-w}Z`;
  return d;
};

const notes = [
  ['Layering the terrain with', 'built intervention, whilst', 'accupunturing the ground', 'with minimal contact in', 'order to activate the', 'courtyard below with', 'open program.'],
  ['Revitalising the carcass of', 'the existing buildings with', 'new life, housing the', 'workshops, material storage', 'and gallery.'],
];

const AxonometricArtwork = () => (
  <svg viewBox="0 0 712 959" preserveAspectRatio="xMidYMin slice" fontFamily='"Liberation Sans", sans-serif'>
    <defs>
      <pattern id="ground" width="8" height="9" patternUnits="userSpaceOnUse">
        <path d="M2 1v3M6 5v3" stroke="#8a8a92" strokeWidth="1.500" />
      </pattern>
      <pattern id="deck" width="6" height="6" patternUnits="userSpaceOnUse" patternTransform="rotate(8)">
        <rect x="1" y="1" width="3" height="3" fill="#4a4a58" />
      </pattern>
    </defs>
    <rect width="712" height="959" fill="#fff" />
    <g transform="scale(.4847 .3954) translate(-45 -83)" fill="none" strokeWidth="2" stroke="#8c8c8c">
      <path d={site} stroke="#999" />
      <g strokeDasharray="8 6" stroke="#b9b9b9">
        <path d="M440 810V1568M540 560V1200M590 640V1300M665 600V1300M735 1060V1500M790 1270V1568M955 440V1400M887 1300V1568M985 350V420M1097 1200V1568" />
      </g>
      <g stroke="#cf9a7a" strokeWidth="2">
        <path d={mesh(755, 375, [170, -85], [0, 85], 8, 4, true)} />
        <path d={mesh(790, 460, [200, -110], [0, 45], 8, 3, true)} />
        <path d={mesh(925, 322, [60, -32], [0, 120], 2, 4, true)} />
        <path d={mesh(985, 288, [37, 30], [0, 50], 2, 2)} />
        <path d={mesh(665, 575, [320, -175], [0, 45], 14, 3, true)} />
        <path d={mesh(540, 465, [125, 110], [0, 35], 8, 3, true)} />
        <path d={mesh(560, 510, [105, 90], [0, 75], 6, 4, true)} />
        <path d="M625 1180 648 1225M620 1192 640 1185M625 1202 648 1195M630 1212 655 1205M490 1230 515 1215M490 1270 510 1275M600 1250V1310M650 1360 700 1340" />
      </g>
      <path d="M525 430 585 392 645 438 580 475ZM585 478 710 402 815 485 690 560Z" fill="#fff" stroke="#c2a999" />
      <g stroke="#7c7f7c">
        <path d="M440 715 515 638 935 965 940 990 845 1010M440 715V810L830 1065M440 770 830 1030M440 715 835 1040M460 700V790M530 650 720 780" fill="none" />
        <path d={trusses()} />
        <path d={windowRow(465, 745, 18, 15, 11, 9, 16)} />
        <path d={windowRow(465, 795, 18, 15, 10, 9, 16)} />
        <path d={mesh(652, 890, [180, 145], [0, 55], 22, 1)} />
        <path d="M450 830 640 985M460 850 640 1000M640 985V1020M645 985V1025M705 1035V1080M710 1035V1080M735 1060V1105M770 1080V1130" strokeDasharray="6 4" />
      </g>
      <path d="M825 1060 875 992 1095 1130 980 1200ZM1040 1125 980 1200M1040 1125 1095 1130M1040 1125 875 992" fill="#fff" stroke="#a0a0a0" />
      <g stroke="#858885" strokeWidth="2">
        <path d={mesh(795, 1060, [35, 30], [0, 215], 2, 8, true)} />
        <path d={mesh(830, 1090, [30, -15], [0, 210], 1, 8, true)} />
        <path d={mesh(860, 1110, [120, 95], [0, 140], 4, 5)} strokeWidth="4" />
        <path d={mesh(980, 1200, [115, -70], [0, 120], 4, 4)} strokeWidth="3" />
        <path d="M795 1270V1300M830 1300V1310M888 1260V1330M918 1290V1357M950 1310V1385M982 1330V1410" strokeWidth="5" />
        <path d={mesh(985, 1240, [60, 50], [0, 110], 4, 4, true)} stroke="#5c5f5c" />
        <path d={mesh(1045, 1290, [118, -50], [0, 110], 5, 4, true)} stroke="#5c5f5c" />
        <path d={mesh(985, 1240, [115, -50], [60, 50], 4, 4, true)} stroke="#5c5f5c" />
        <path d="M1163 1235 1178 1355 1150 1375 1100 1340" stroke="#5c5f5c" />
      </g>
      <g stroke="#777b84">
        <path d="M440 1225 515 1165 665 1290 620 1330M440 1225V1290L640 1450V1400M440 1245 660 1420M480 1200V1260M515 1165V1230L560 1260M540 1225 565 1205 595 1235V1290L565 1310 540 1285ZM600 1270 640 1250 680 1290" />
        <path d={mesh(660, 1380, [180, 150], [95, -60], 7, 4)} stroke="#7d849a" strokeWidth="3" />
        <path d={mesh(660, 1385, [180, 150], [0, 30], 12, 1, true)} stroke="#56638c" />
        <path d={mesh(660, 1290, [90, 70], [0, 35], 8, 1, true)} stroke="#56638c" />
        <path d={mesh(840, 1530, [95, -65], [0, 40], 6, 1, true)} stroke="#7d849a" />
        <path d="M645 1420V1455M705 1460V1510" stroke="#30407a" strokeWidth="4" />
      </g>
      <g stroke="#7b7b7b">
        <path d="M47 1240 270 1255 450 1400 385 1470 47 1425M270 1255 205 1430M47 1310 240 1325M47 1370 215 1385M245 1345 270 1350 260 1410 235 1410ZM75 1425V1568M98 1430V1568M135 1440V1568M155 1440V1568M195 1445V1568M235 1450V1568M290 1460V1568M332 1465V1568M360 1470V1568M385 1470V1568M450 1400V1540L440 1568M205 1445 385 1490M47 1240 30 1230" />
        <path d="M47 1250 260 1268M47 1322 240 1336M47 1382 210 1400M265 1265 430 1395" strokeWidth="4" strokeDasharray="7 4" stroke="#555" />
        <path d={windowRow(40, 1098, 38, 4, 5, 18, 24)} stroke="#555" />
        <path d={windowRow(40, 1145, 38, 4, 5, 18, 28)} stroke="#555" />
        <path d={windowRow(40, 1192, 38, 4, 5, 18, 28)} stroke="#555" />
      </g>
      <g stroke="#373b48" strokeWidth="3.500">
        {[[40, 1455], [100, 1462], [158, 1470], [235, 1480], [295, 1490]].map(([x, y]) => (
          <React.Fragment key={x}>
            <path d={mesh(x, y, [34, 5], [0, 30], 6, 4)} />
            <path d={mesh(x, y + 42, [34, 5], [0, 30], 6, 4)} />
          </React.Fragment>
        ))}
      </g>
      <path d="M440 1568 488 1492 517 1480 530 1492 543 1488 640 1568" stroke="#a8489e" strokeWidth="3" />
      <path d="M1270 390H1470V1568H1270Z" fill="#fafafa" stroke="#e3e3e3" />
      <path d="M1290 705H1368V1465M1368 1040H1445V1250L1368 1300M1310 1010C1340 960 1330 850 1365 770M1310 1250 1360 1200M1310 1330 1360 1400" stroke="#e2e2e4" />
    </g>
    {/* lower part of the site, partly under the tab bar */}
    <g fill="none" stroke="#8a8a8a">
      <path d="M0 580 158 600V655L143 660 140 600M30 600 70 612 60 655 20 640ZM70 612V640L100 650M110 595V655M158 640 210 580M160 650 230 605 260 650M330 567V620L400 650 500 620M380 590 440 640 500 600 560 567M230 567 245 580 262 567M300 600 360 567M560 620 600 580M690 600 712 580M690 640 712 620" />
      <path d="M182 580 200 567M247 567 330 660" stroke="#a8489e" strokeWidth="1.500" />
      <path d={mesh(400, 600, [70, 40], [24, -22], 5, 3)} stroke="#8a9470" />
      <path d={mesh(340, 567, [50, 30], [-6, 26], 6, 4)} stroke="#5c6a94" />
      <path d={mesh(692, 570, [20, -14], [0, 90], 3, 7)} />
      <path d={mesh(595, 610, [95, -60], [0, 50], 1, 6)} stroke="#cfcfcf" />
      <path d="M600 850 712 770M620 870 712 800M640 830 680 880V940M670 860H712M0 880H20V959M10 870 40 959M130 890 200 880 205 950M110 905 205 935 300 905M270 890 290 950 400 890M30 860 130 920M640 940C640 900 650 880 660 870M236 950V930Q246 915 257 930V948" />
      <path d="M200 868 270 868 280 900 225 905Z" fill="#6b6b76" stroke="none" />
      <path d="M275 868H400L424 895 292 959 275 920Z" fill="url(#deck)" stroke="none" />
      <path d="M293 868H345L360 890 300 925Z" fill="#dcdce0" stroke="#777" />
      <path d="M292 952 385 905" stroke="#555" strokeWidth="5" />
      <path d="M300 959 424 870H600L650 900 640 959Z" fill="url(#ground)" stroke="none" />
      <path d="M588 884 650 868" stroke="#5c6a94" strokeWidth="16" />
      <path d="M590 900 660 876" stroke="#7d7d86" strokeWidth="4" />
    </g>
    <g opacity="0.8">
      <path d="M200 700h60l20 90h-70Z" fill="#a8a9ae" />
      <ellipse cx="325" cy="810" rx="18" ry="30" fill="#7482c2" />
      <ellipse cx="415" cy="775" rx="22" ry="10" fill="#8c8c8c" />
      <ellipse cx="640" cy="805" rx="18" ry="18" fill="#c77dbb" />
      <path d="M160 640q30 10 20 70" fill="none" stroke="#b9bf96" strokeWidth="16" />
    </g>
    <rect x="28" y="862" width="100" height="84" fill="#f4f4f6" stroke="#a5a5aa" />
    <g fill="#33333d" fontSize="8">
      <text x="41" y="885">Existing buildings</text>
      <text x="41" y="898">Retrofit (repeating element)</text>
      <text x="61" y="914">Rewilding</text>
      <text x="61" y="932">Canal</text>
      <path d="M41 905h5v5h-5zM49 905h5v5h-5zM41 912h5v5h-5zM49 912h5v5h-5z" />
    </g>
    <path d="M41 924h14v12h-14z" fill="none" stroke="#77777f" strokeDasharray="2 3" />
    <g fill="#e6c4e2" stroke="#8e3a87" strokeWidth="0.600" textAnchor="middle" fontWeight="700">
      <text x="361" y="42" fontSize="20">LAYERS OF THE BUILT ENVIRONMENT</text>
      <g fontSize="13" fill="#d7a6d2">
        <text x="641" y="153">Proposed</text>
        <text x="641" y="168">Intervention</text>
        <text x="641" y="405">Existing</text>
        <text x="641" y="420">buildings</text>
        <text x="641" y="566">Retrofit</text>
        <text x="662" y="685">How to Fill</text>
      </g>
    </g>
    <g fill="#8e3a87" fontSize="7">
      {notes.map((lines, n) => lines.map((line, i) => (
        <text key={line} x="601" y={(n ? 583 : 187) + i * 8}>{line}</text>
      )))}
    </g>
    <g fill="#33333d" fontSize="7">
      {['built', 'material', 'fund', 'enviro-', 'nt plan', 'tend area'].map((line, i) => <text key={line} x="656" y={786 + i * 8}>{line}</text>)}
    </g>
  </svg>
);

/* ---------- page ---------- */

const description = `My CSM BA(Hons)Architecture Graduate Project.
Carving a plan is a placemaking cultural centre,
offering an alternative way to heighten the
interaction between artist, public and boat-dwelling
communities in Hackney Wick, Fish Island, London.`;

const tabs = [
  { name: 'Home', Icon: HomeIcon, tint: '#e0f5ff' },
  { name: 'Network', Icon: NetworkIcon, tint: '#e0f5ff' },
  { name: 'Studios', Icon: StudiosIcon, tint: '#ffffff', active: true },
  { name: 'Activity', Icon: HeartIcon, tint: '#f4f9ff' },
  { name: 'Profile', Icon: ProfileIcon, tint: '#f4f9ff' },
];

export default function App() {
  return (
    <Page>
      <GlobalStyle />
      <Device>
        <Key $top={728} $height={135} $width={16} />
        <Key $top={989} $height={269} $width={12} />
        <Key $top={1328} $height={269} $width={12} />
        <Key $top={1076} $height={428} $right />
        <Band $side="top" $from="right" $at={344} />
        <Band $side="left" $from="top" $at={370} />
        <Band $side="right" $from="top" $at={370} />
        <Band $side="left" $from="bottom" $at={364} />
        <Band $side="right" $from="bottom" $at={364} />
        <Band $side="bottom" $from="left" $at={340} />
        <Rim>
          <Bezel>
            <Speaker />
            <Screen>
              <StatusBar>
                <Clock>09:09</Clock>
                <Island><Camera /></Island>
                <Indicators>
                  <Signal />
                  <Wifi />
                  <Battery><Charge>80</Charge><BatteryTip /></Battery>
                </Indicators>
              </StatusBar>
              <Header>
                <BackButton aria-label="Back"><ChevronLeft /></BackButton>
                <ActionPill>
                  <PillButton><Plus />Add</PillButton>
                  <PillButton aria-label="More"><Dots /></PillButton>
                </ActionPill>
              </Header>

              <Details>
                <Meta>
                  <span>SHOWCASE</span>
                  <span>13 posts</span>
                  <MetaItem><GlobeLine />public</MetaItem>
                  <MetaItem><MemberCheck />closed</MetaItem>
                </Meta>
                <Title>Carving A Plan CSM ARCH 2023</Title>
                <Description>{description}</Description>
                <Tags>
                  <Tag href="#architecture">architecture</Tag>
                  <Tag href="#portfolio">portfolio</Tag>
                  <Tag href="#more">+1</Tag>
                </Tags>
                <Credit>piers last edited 2 mo ago</Credit>
                <Credit>{'created by piers  ·  3 followers'}</Credit>
                <Achievements aria-expanded="false"><Star />achievements<ChevronDown /></Achievements>
                <Actions>
                  <Action>Edit Studio</Action>
                  <Action>Atmosphere</Action>
                  <Action aria-label="Layout"><GridOutline /></Action>
                  <Action $wide>Edit showcase</Action>
                </Actions>
              </Details>

              <Gallery>
                <Post href="#map"><MapArtwork /><Pin><PinIcon /></Pin></Post>
                <Post href="#layers"><AxonometricArtwork /><Pin><PinIcon /></Pin></Post>
              </Gallery>
              <Fade />

              <TabBar>
                {tabs.map(({ name, Icon, tint, active }) => (
                  <Tab key={name} href={`#${name.toLowerCase()}`} $tint={tint} $active={active} aria-current={active ? 'page' : undefined}>
                    <TabIcon><Icon /></TabIcon>
                    {name}
                  </Tab>
                ))}
              </TabBar>
            </Screen>
          </Bezel>
        </Rim>
      </Device>
    </Page>
  );
}
